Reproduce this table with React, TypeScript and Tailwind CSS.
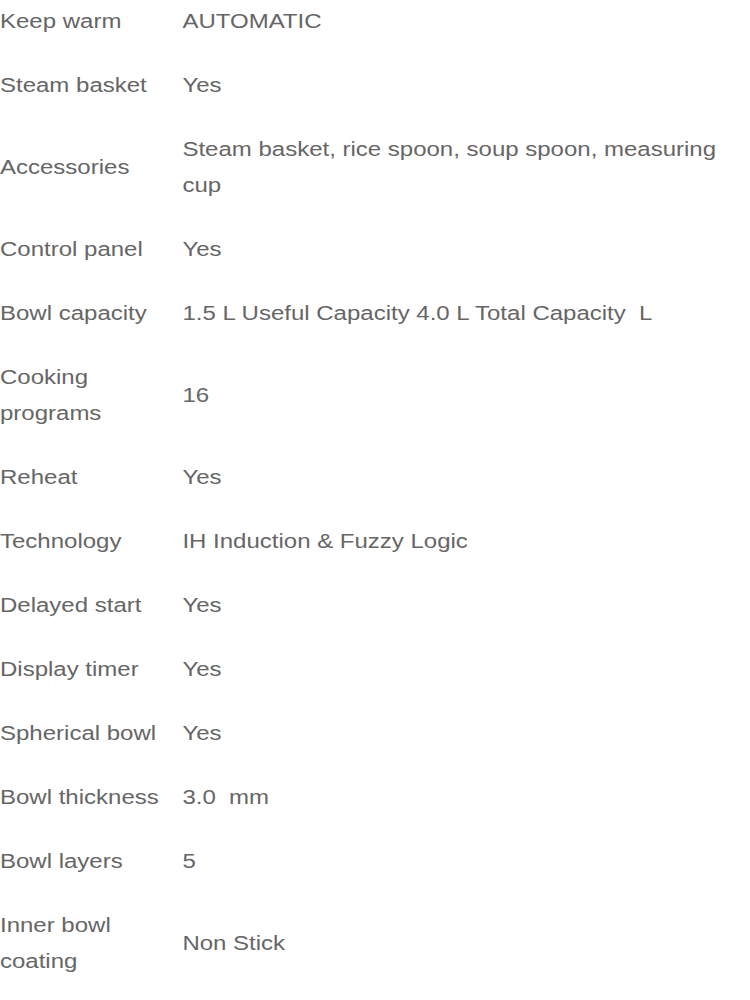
import React from "react";

const rows: [string, string][] = [
  ["Keep warm", "AUTOMATIC"],
  ["Steam basket", "Yes"],
  ["Accessories", "Steam basket, rice spoon, soup spoon, measuring cup"],
  ["Control panel", "Yes"],
  ["Bowl capacity", "1.5 L Useful Capacity 4.0 L Total Capacity \u00a0L"],
  ["Cooking programs", "16"],
  ["Reheat", "Yes"],
  ["Technology", "IH Induction & Fuzzy Logic"],
  ["Delayed start", "Yes"],
  ["Display timer", "Yes"],
  ["Spherical bowl", "Yes"],
  ["Bowl thickness", "3.0 \u00a0mm"],
  ["Bowl layers", "5"],
  ["Inner bowl coating", "Non Stick"],
];

export default function App() {
  return (
    <div className="w-[750px] h-[1000px] overflow-hidden bg-white">
      <div
        className="w-[625px] origin-top-left scale-x-[1.2] -mt-[11px] text-[#666666] text-[20px] leading-[36px]"
        style={{ fontFamily: '"Liberation Sans", Arial, sans-serif' }}
      >
        {rows.map(([k, v]) => (
          <div key={k} className="grid grid-cols-[152px_1fr] items-center py-[14px]">
            <div className="pr-[8px]">{k}</div>
            <div>{v}</div>
          </div>
        ))}
      </div>
    </div>
  );
}
